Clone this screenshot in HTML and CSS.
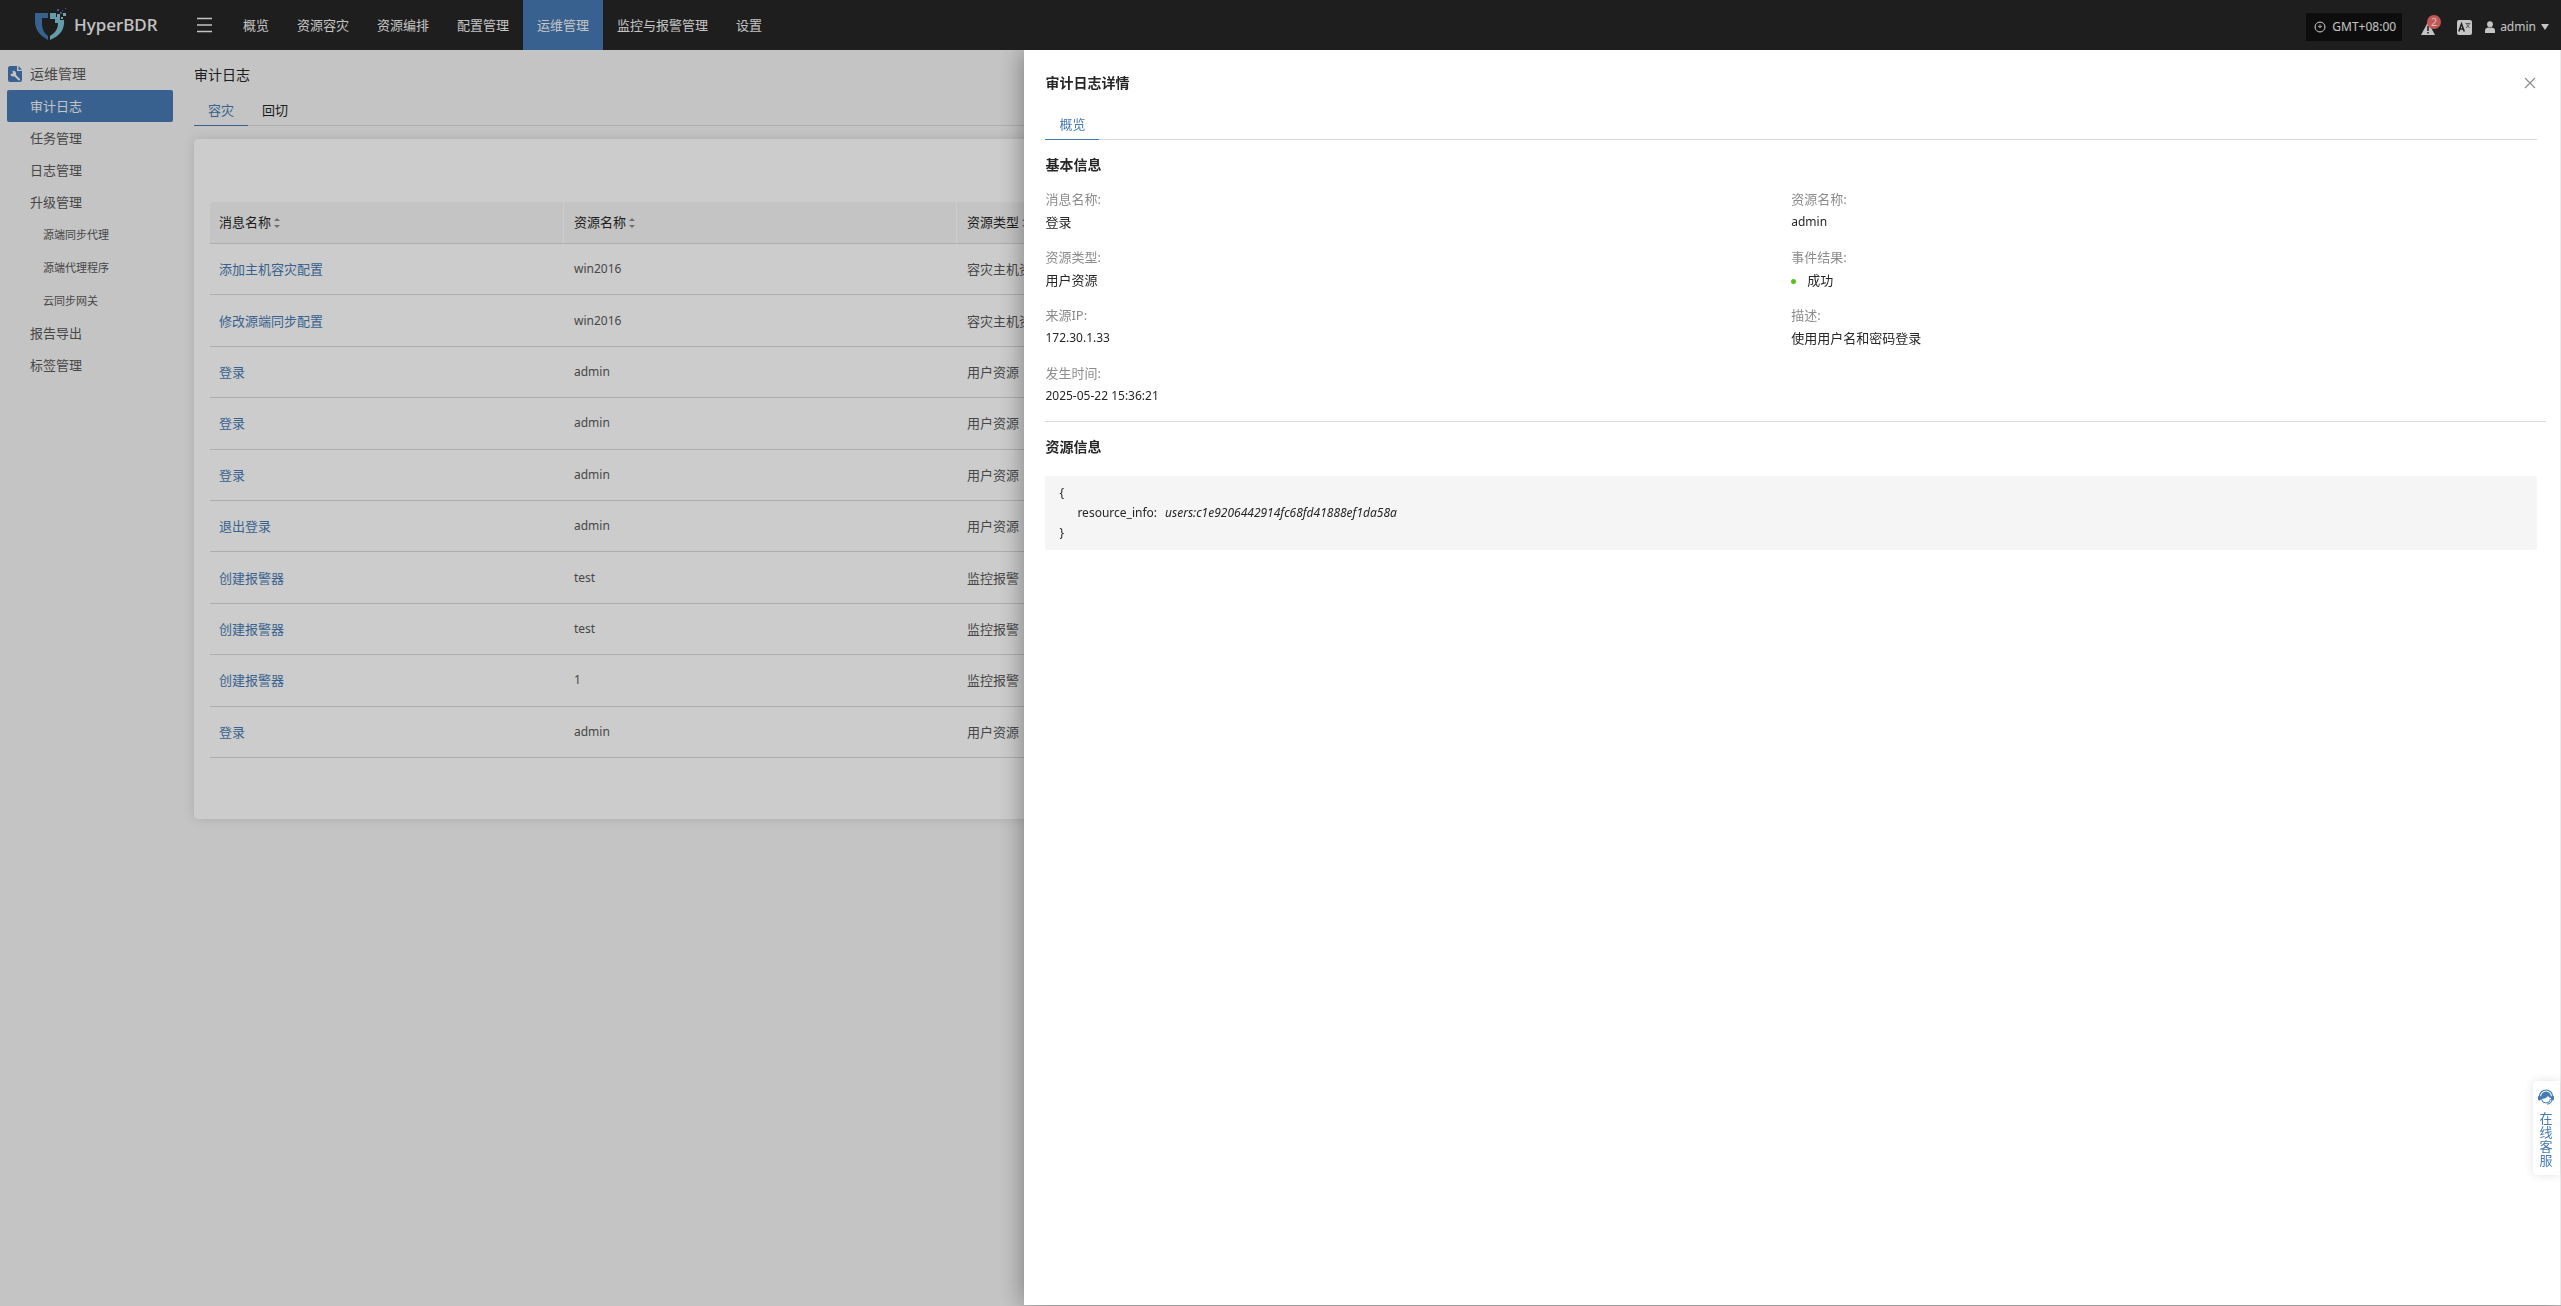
FILE: index.html
```html
<!DOCTYPE html>
<html lang="zh-CN">
<head>
    <meta charset="UTF-8">
    <meta name="viewport" content="width=device-width, initial-scale=1.0">
    <title>HyperBDR</title>
    <link rel="stylesheet" href="styles.css">
</head>
<body>
    <header class="header">
        <a href="#" class="logo">
            <svg class="logo-mark" viewBox="0 0 32 34">
                <path fill="#467ab3" d="M0 5h13v5H7v5c0 6 2 10 6 13v4C4 27 0 21 0 13z"/>
                <path fill="#7cc5d6" d="M15 5h6v4h4v3h4c1 9-4 16-14 20v-4c5-3 8-7 8-13h-3v-4h-5z"/>
                <path fill="#9fc3d4" d="M22 6h3v3h-3zM28 5h3v3h-3zM26 9h2v2h-2z"/>
                <path fill="#467ab3" d="M22 1h2v2h-2zM25 4h2v2h-2zM27 2h1v1h-1zM30 0h1v1h-1z"/>
            </svg>
            <span>HyperBDR</span>
        </a>
        <button class="menu-btn" aria-label="menu">
            <svg width="15" height="16" viewBox="0 0 15 16"><path d="M0 1.500h15M0 8h15M0 14.500h15" stroke="#f5f5f5" stroke-width="1.400"/></svg>
        </button>
        <nav class="nav">
            <a href="#">概览</a>
            <a href="#">资源容灾</a>
            <a href="#">资源编排</a>
            <a href="#">配置管理</a>
            <a href="#" class="active">运维管理</a>
            <a href="#">监控与报警管理</a>
            <a href="#">设置</a>
        </nav>
        <div class="header-right">
            <button class="timezone">
                <svg width="12" height="12" viewBox="0 0 12 12" fill="none" stroke="#f5f5f5">
                    <circle cx="6" cy="6" r="5"/>
                    <path d="M6 3.500v3M6 1v1M6 10v1M1 6h1M10 6h1M4 5l2 1.500 2-1.500" stroke-width=".9"/>
                </svg>
                GMT+08:00
            </button>
            <button class="alarm" aria-label="alarm">
                <svg width="14" height="13" viewBox="0 0 14 13"><path d="M7 0l7 13H0z" fill="#f5f5f5"/><path d="M7 4v5M7 10v1.500" stroke="#262626" stroke-width="1.500"/></svg>
                <span class="badge">2</span>
            </button>
            <button class="lang" aria-label="language">
                <svg width="15" height="15" viewBox="0 0 15 15">
                    <rect width="15" height="15" rx="2" fill="#f5f5f5"/>
                    <path d="M1.800 11.500L4.500 4l2.800 7.500M2.700 9h3.800" fill="none" stroke="#262626" stroke-width="1.500"/>
                    <path d="M8.500 3.500h5M9.500 4l3 4M12.500 4l-3.500 4" fill="none" stroke="#555" stroke-width=".8"/>
                </svg>
            </button>
            <button class="user">
                <svg width="10" height="12" viewBox="0 0 10 12" fill="#f5f5f5"><circle cx="5" cy="3.200" r="2.900"/><path d="M0 12V9.500Q0 7 3 6.500h4q3 .5 3 3V12z"/></svg>
                admin
                <svg class="caret" width="8" height="6" viewBox="0 0 8 6"><path d="M0 0h8L4 6z" fill="#f5f5f5"/></svg>
            </button>
        </div>
    </header>

    <div class="layout">
        <aside class="sidebar">
            <div class="sidebar-title">
                <svg width="14" height="16" viewBox="0 0 14 16">
                    <path d="M2 0h7v5h5v9q0 2-2 2H2q-2 0-2-2V2q0-2 2-2z" fill="#467ab3"/>
                    <path d="M10.500 0L14 3.800h-3.500z" fill="#467ab3"/>
                    <path d="M6 8.500l5 5" stroke="#f5f5f5" stroke-width="2" stroke-linecap="round"/>
                    <path d="M4.500 5l.5 2.500-2.500.5A2.800 2.800 0 1 0 4.500 5z" fill="#f5f5f5"/>
                </svg>
                运维管理
            </div>
            <ul class="menu">
                <li><a href="#" class="active">审计日志</a></li>
                <li><a href="#">任务管理</a></li>
                <li><a href="#">日志管理</a></li>
                <li>
                    <a href="#">升级管理</a>
                    <ul class="submenu">
                        <li><a href="#">源端同步代理</a></li>
                        <li><a href="#">源端代理程序</a></li>
                        <li><a href="#">云同步网关</a></li>
                    </ul>
                </li>
                <li><a href="#">报告导出</a></li>
                <li><a href="#">标签管理</a></li>
            </ul>
        </aside>

        <main class="content">
            <h1 class="page-title">审计日志</h1>
            <div class="tabs">
                <a href="#" class="active">容灾</a>
                <a href="#">回切</a>
            </div>
            <section class="card">
                <table class="table">
                    <colgroup>
                        <col class="col-name">
                        <col class="col-resource">
                        <col>
                    </colgroup>
                    <thead>
                        <tr>
                            <th>消息名称<span class="sorter"></span></th>
                            <th>资源名称<span class="sorter"></span></th>
                            <th>资源类型<span class="sorter"></span></th>
                        </tr>
                    </thead>
                    <tbody>
                        <tr><td><a href="#">添加主机容灾配置</a></td><td class="latin">win2016</td><td>容灾主机资源</td></tr>
                        <tr><td><a href="#">修改源端同步配置</a></td><td class="latin">win2016</td><td>容灾主机资源</td></tr>
                        <tr><td><a href="#">登录</a></td><td class="latin">admin</td><td>用户资源</td></tr>
                        <tr><td><a href="#">登录</a></td><td class="latin">admin</td><td>用户资源</td></tr>
                        <tr><td><a href="#">登录</a></td><td class="latin">admin</td><td>用户资源</td></tr>
                        <tr><td><a href="#">退出登录</a></td><td class="latin">admin</td><td>用户资源</td></tr>
                        <tr><td><a href="#">创建报警器</a></td><td class="latin">test</td><td>监控报警</td></tr>
                        <tr><td><a href="#">创建报警器</a></td><td class="latin">test</td><td>监控报警</td></tr>
                        <tr><td><a href="#">创建报警器</a></td><td class="latin">1</td><td>监控报警</td></tr>
                        <tr><td><a href="#">登录</a></td><td class="latin">admin</td><td>用户资源</td></tr>
                    </tbody>
                </table>
            </section>
        </main>
    </div>

    <div class="mask"></div>

    <!-- Detail drawer -->
    <div class="drawer" role="dialog" aria-labelledby="drawerTitle">
        <div class="drawer-header">
            <h2 id="drawerTitle">审计日志详情</h2>
            <button class="close" aria-label="close">
                <svg width="12" height="12" viewBox="0 0 12 12"><path d="M1 1l10 10M11 1L1 11" stroke="#8c8c8c" stroke-width="1.200"/></svg>
            </button>
        </div>
        <div class="tabs">
            <a href="#" class="active">概览</a>
        </div>
        <div class="section basic">
            <h3>基本信息</h3>
            <dl class="info">
                <div><dt>消息名称:</dt><dd>登录</dd></div>
                <div><dt>资源名称:</dt><dd class="latin">admin</dd></div>
                <div><dt>资源类型:</dt><dd>用户资源</dd></div>
                <div><dt>事件结果:</dt><dd class="status">成功</dd></div>
                <div><dt>来源IP:</dt><dd class="latin">172.30.1.33</dd></div>
                <div><dt>描述:</dt><dd>使用用户名和密码登录</dd></div>
                <div><dt>发生时间:</dt><dd class="latin">2025-05-22 15:36:21</dd></div>
            </dl>
        </div>
        <div class="section">
            <h3>资源信息</h3>
            <div class="code">
                <div>{</div>
                <div class="code-line"><span>resource_info:</span><em>users:c1e9206442914fc68fd41888ef1da58a</em></div>
                <div>}</div>
            </div>
        </div>
    </div>

    <button class="service">
        <svg width="16" height="16" viewBox="0 0 16 16">
            <path d="M1.500 9V7a6.500 6 0 0 1 13 0v2" fill="none" stroke="#467ab3" stroke-width="1.200"/>
            <path d="M3 8a5 5.500 0 0 1 10 0v1q-2 0-3-2-2 3-7 3z" fill="#467ab3"/>
            <rect y="6.500" width="3" height="5" rx="1.500" fill="#467ab3"/>
            <rect x="13" y="6.500" width="3" height="5" rx="1.500" fill="#467ab3"/>
            <path d="M3.500 10q.5 4 4.500 4t4.500-4M14 11q-.5 4-5 4.300" fill="none" stroke="#467ab3"/>
        </svg>
        <span>在线客服</span>
    </button>
</body>
</html>
```
FILE: styles.css
```css
* {
    box-sizing: border-box;
}
body {
    margin: 0;
    min-height: 100vh;
    background-color: #f5f5f5;
    color: #262626;
    font-family: "Noto Sans", "Noto Sans CJK SC", sans-serif;
    font-size: 13px;
    line-height: 20px;
}
a {
    color: inherit;
    text-decoration: none;
}
button {
    border: none;
    padding: 0;
    background: none;
    color: inherit;
    font: inherit;
    cursor: pointer;
}
h1, h2, h3, ul, dl, dd {
    margin: 0;
    padding: 0;
}
ul {
    list-style: none;
}
.latin {
    font-size: 12px;
}

/* Header */
.header {
    display: flex;
    align-items: center;
    height: 50px;
    background-color: #262626;
    color: #f5f5f5;
}
.logo {
    display: flex;
    align-items: center;
    gap: 7px;
    width: 197px;
    padding-left: 35px;
    font-size: 17px;
    font-weight: 500;
}
.logo-mark {
    width: 32px;
    height: 34px;
}
.menu-btn {
    display: flex;
    margin-right: 17px;
}
.nav {
    display: flex;
}
.nav a {
    padding: 0 14px;
    line-height: 50px;
}
.nav .active {
    background-color: #467ab3;
}
.header-right {
    display: flex;
    align-items: center;
    margin-left: auto;
    padding: 4px 12px 0 0;
    font-size: 12px;
}
.header-right button {
    display: flex;
    align-items: center;
}
.header-right .timezone {
    gap: 6px;
    height: 28px;
    padding: 0 6px 0 8px;
    background-color: #111;
}
.alarm {
    position: relative;
    margin: 2px 22px 0 19px;
}
.badge {
    position: absolute;
    top: -7px;
    left: 6px;
    width: 14px;
    height: 14px;
    border-radius: 50%;
    background-color: #f56c6c;
    font-size: 11px;
    line-height: 14px;
}
.user {
    gap: 5px;
    margin-left: 13px;
}

/* Sidebar */
.layout {
    display: flex;
}
.sidebar {
    width: 180px;
    padding: 11px 7px;
    color: #595959;
}
.sidebar-title {
    display: flex;
    align-items: center;
    gap: 8px;
    height: 26px;
    margin-bottom: 3px;
    padding-left: 1px;
    font-size: 14px;
}
.menu a {
    display: block;
    padding-left: 23px;
    border-radius: 2px;
    line-height: 32px;
}
.menu .active {
    background-color: #467ab3;
    color: #f5f5f5;
}
.menu .submenu a {
    padding-left: 36px;
    font-size: 11px;
    line-height: 33px;
}

/* Content */
.content {
    flex: 1;
    padding: 15px 20px 0 14px;
}
.page-title {
    font-size: 14px;
    font-weight: 400;
}
.tabs {
    display: flex;
    border-bottom: 1px solid #d9d9d9;
}
.tabs a {
    margin-bottom: -1px;
    padding: 0 14px 2px;
    border-bottom: 1px solid transparent;
    line-height: 26px;
}
.tabs .active {
    border-color: #467ab3;
    color: #467ab3;
}
.content .tabs {
    margin-top: 12px;
}
.card {
    margin-top: 13px;
    padding: 63px 16px 61px;
    border-radius: 4px;
    background-color: #fff;
    box-shadow: 0 0 12px rgba(0, 0, 0, 0.12);
}
.table {
    width: 100%;
    height: 556px;
    border-collapse: separate;
    border-spacing: 0;
    table-layout: fixed;
}
.col-name {
    width: 353px;
}
.col-resource {
    width: 393px;
}
.table th,
.table td {
    padding: 0 9px;
    border-bottom: 1px solid #d9d9d9;
    text-align: left;
}
.table th {
    height: 42px;
    padding-bottom: 2px;
    background-color: #f5f5f5;
    font-weight: 400;
}
.table th:first-child {
    border-top-left-radius: 4px;
}
.table th + th {
    border-left: 1px solid #fff;
}
.table td + td {
    padding-left: 11px;
}
.table th + th {
    padding-left: 10px;
}
.table td {
    color: #595959;
}
.table td a {
    color: #467ab3;
}
.sorter {
    display: inline-flex;
    flex-direction: column;
    gap: 4px;
    margin-left: 3px;
    vertical-align: middle;
}
.sorter::before,
.sorter::after {
    content: "";
    border: 3px solid transparent;
}
.sorter::before {
    border-top: 0;
    border-bottom-color: #8c8c8c;
}
.sorter::after {
    border-bottom: 0;
    border-top-color: #8c8c8c;
}

/* Drawer */
.mask {
    position: fixed;
    inset: 0;
    background-color: rgba(0, 0, 0, 0.2);
}
.drawer {
    position: fixed;
    top: 50px;
    right: 0;
    bottom: 1px;
    width: 60%;
    padding: 22px 23px 0 21px;
    border-right: 1px solid #ebebeb;
    background-color: #fff;
    box-shadow: 0 0 24px rgba(0, 0, 0, 0.4);
    clip-path: inset(0 0 -1px -40px);
}
.drawer-header {
    display: flex;
    align-items: center;
    justify-content: space-between;
    margin-bottom: 17px;
}
.drawer-header h2,
.section h3 {
    font-size: 14px;
    font-weight: 600;
    line-height: 22px;
}
.close {
    display: flex;
    margin-right: 1px;
}
.section {
    padding-top: 14px;
}
.basic {
    margin-right: -9px;
    padding-bottom: 13px;
    border-bottom: 1px solid #d9d9d9;
}
.info {
    display: grid;
    grid-template-columns: 1fr 1fr;
    gap: 12px 0;
    margin: 12px 9px 0 0;
}
.info dt {
    color: #8c8c8c;
    line-height: 22px;
}
.info dd {
    line-height: 24px;
}
.status::before {
    content: "";
    display: inline-block;
    width: 5px;
    height: 5px;
    margin-right: 11px;
    border-radius: 50%;
    background-color: #52c41a;
    vertical-align: middle;
}
.code {
    margin-top: 18px;
    padding: 7px 14px;
    border-radius: 2px;
    background-color: #f5f5f5;
    font-size: 12px;
}
.code-line {
    display: flex;
    gap: 8px;
    padding-left: 18px;
}

/* Online service */
.service {
    position: fixed;
    right: 1px;
    bottom: 131px;
    display: flex;
    flex-direction: column;
    align-items: center;
    gap: 6px;
    width: 27px;
    padding: 8px 1px 8px 0;
    border-radius: 4px 0 0 4px;
    background-color: #fff;
    box-shadow: 0 0 10px rgba(0, 0, 0, 0.12);
    color: #467ab3;
}
.service span {
    width: 13px;
    line-height: 14px;
}
```
